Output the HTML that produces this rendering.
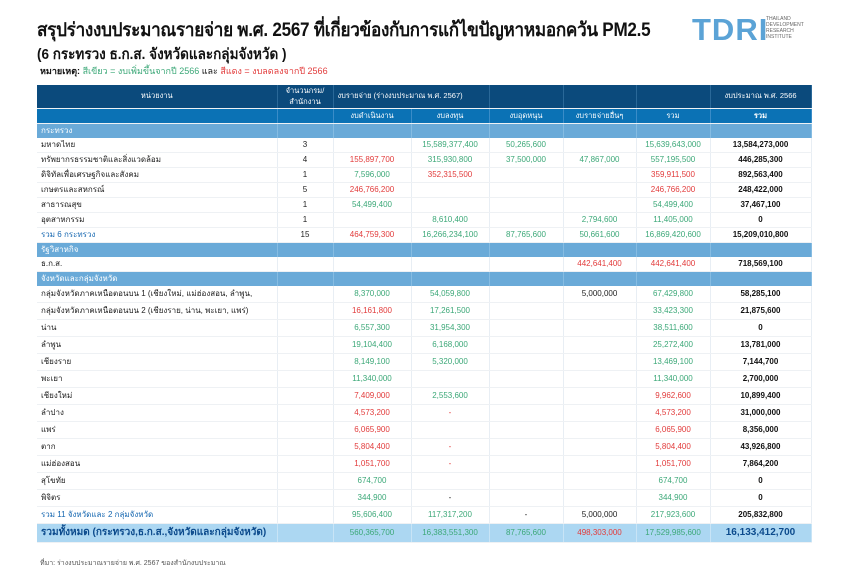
<!DOCTYPE html>
<html><head><meta charset="utf-8"><style>
body{margin:0;width:850px;height:574px;background:#fff;font-family:"Liberation Sans","Noto Sans CJK SC",sans-serif;position:relative;overflow:hidden}
.t1{position:absolute;left:37px;top:15px;font-size:19px;font-weight:bold;color:#111;letter-spacing:-0.3px;white-space:nowrap;transform:scaleX(0.9);transform-origin:left top}
.t2{position:absolute;left:37px;top:42px;font-size:15px;font-weight:bold;color:#111;white-space:nowrap;transform:scaleX(0.9);transform-origin:left top}
.t3{position:absolute;left:40px;top:64px;font-size:9px;color:#111;white-space:nowrap}
.g{color:#3ca878}.r{color:#e23b3b}
table{position:absolute;left:37px;top:85px;border-collapse:collapse;table-layout:fixed;width:774px;font-size:8px;line-height:1}
td{padding:0 4px;white-space:nowrap;overflow:hidden;border-right:1px solid #e8eef4;border-bottom:1px solid #eef1f4;text-align:center;height:14px;color:#222}
td:first-child{text-align:left}
tr.h1 td{background:#0b4a7c;color:#fff;height:23px;border-right:1px solid #2a6898;font-size:7.5px;line-height:1.35}
tr.h2 td{background:#0b72b5;color:#fff;height:14px;border-right:1px solid #3a8cc8;font-size:7.5px}
tr.s td{background:#6aaad8;color:#fff;height:14px;border-right:1px solid #86bce2;border-bottom:none}
tr.p td{height:16px}
tr.sum td:first-child{color:#1466b0}
td.b{font-weight:bold;color:#111}
tr.tot td{background:#acd7f2;height:18px;border-right:1px solid #c8e4f6}
tr.tot td:first-child{color:#0b4a8c;font-weight:bold;font-size:10px}
tr.tot td.b{color:#0b4a8c;font-size:10px}
.logo{position:absolute;left:692px;top:12px;font-size:31px;font-weight:bold;color:#5ba3d6;letter-spacing:1px}
.lt{position:absolute;left:766px;top:16px;font-size:5px;line-height:6px;color:#666}
.ft{position:absolute;left:40px;top:558px;font-size:7px;color:#555}
</style></head><body>
<div class="t1">สรุปร่างงบประมาณรายจ่าย พ.ศ. 2567 ที่เกี่ยวข้องกับการแก้ไขปัญหาหมอกควัน PM2.5</div>
<div class="t2">(6 กระทรวง ธ.ก.ส. จังหวัดและกลุ่มจังหวัด )</div>
<div class="t3"><b>หมายเหตุ:</b> <span class="g">สีเขียว = งบเพิ่มขึ้นจากปี 2566</span> และ <span class="r">สีแดง = งบลดลงจากปี 2566</span></div>
<div class="logo">TDRI</div>
<div class="lt">THAILAND<br>DEVELOPMENT<br>RESEARCH<br>INSTITUTE</div>
<table>
<colgroup><col style="width:240px"><col style="width:56px"><col style="width:78px"><col style="width:78px"><col style="width:74px"><col style="width:73px"><col style="width:74px"><col style="width:101px"></colgroup>
<tr class="h1"><td style="text-align:center">หน่วยงาน</td><td>จำนวนกรม/<br>สำนักงาน</td><td colspan="2" style="text-align:left">งบรายจ่าย (ร่างงบประมาณ พ.ศ. 2567)</td><td></td><td></td><td></td><td>งบประมาณ พ.ศ. 2566</td></tr>
<tr class="h2"><td></td><td></td><td>งบดำเนินงาน</td><td>งบลงทุน</td><td>งบอุดหนุน</td><td>งบรายจ่ายอื่นๆ</td><td>รวม</td><td><b>รวม</b></td></tr>
<tr class="s"><td>กระทรวง</td><td></td><td></td><td></td><td></td><td></td><td></td><td></td></tr>
<tr><td>มหาดไทย</td><td>3</td><td></td><td class="g">15,589,377,400</td><td class="g">50,265,600</td><td></td><td class="g">15,639,643,000</td><td class="b">13,584,273,000</td></tr>
<tr><td>ทรัพยากรธรรมชาติและสิ่งแวดล้อม</td><td>4</td><td class="r">155,897,700</td><td class="g">315,930,800</td><td class="g">37,500,000</td><td class="g">47,867,000</td><td class="g">557,195,500</td><td class="b">446,285,300</td></tr>
<tr><td>ดิจิทัลเพื่อเศรษฐกิจและสังคม</td><td>1</td><td class="g">7,596,000</td><td class="r">352,315,500</td><td></td><td></td><td class="r">359,911,500</td><td class="b">892,563,400</td></tr>
<tr><td>เกษตรและสหกรณ์</td><td>5</td><td class="r">246,766,200</td><td></td><td></td><td></td><td class="r">246,766,200</td><td class="b">248,422,000</td></tr>
<tr><td>สาธารณสุข</td><td>1</td><td class="g">54,499,400</td><td></td><td></td><td></td><td class="g">54,499,400</td><td class="b">37,467,100</td></tr>
<tr><td>อุตสาหกรรม</td><td>1</td><td></td><td class="g">8,610,400</td><td></td><td class="g">2,794,600</td><td class="g">11,405,000</td><td class="b">0</td></tr>
<tr class="sum"><td>รวม 6 กระทรวง</td><td>15</td><td class="r">464,759,300</td><td class="g">16,266,234,100</td><td class="g">87,765,600</td><td class="g">50,661,600</td><td class="g">16,869,420,600</td><td class="b">15,209,010,800</td></tr>
<tr class="s"><td>รัฐวิสาหกิจ</td><td></td><td></td><td></td><td></td><td></td><td></td><td></td></tr>
<tr><td>ธ.ก.ส.</td><td></td><td></td><td></td><td></td><td class="r">442,641,400</td><td class="r">442,641,400</td><td class="b">718,569,100</td></tr>
<tr class="s"><td>จังหวัดและกลุ่มจังหวัด</td><td></td><td></td><td></td><td></td><td></td><td></td><td></td></tr>
<tr class="p"><td>กลุ่มจังหวัดภาคเหนือตอนบน 1 (เชียงใหม่, แม่ฮ่องสอน, ลำพูน,</td><td></td><td class="g">8,370,000</td><td class="g">54,059,800</td><td></td><td>5,000,000</td><td class="g">67,429,800</td><td class="b">58,285,100</td></tr>
<tr class="p"><td>กลุ่มจังหวัดภาคเหนือตอนบน 2 (เชียงราย, น่าน, พะเยา, แพร่)</td><td></td><td class="r">16,161,800</td><td class="g">17,261,500</td><td></td><td></td><td class="g">33,423,300</td><td class="b">21,875,600</td></tr>
<tr class="p"><td>น่าน</td><td></td><td class="g">6,557,300</td><td class="g">31,954,300</td><td></td><td></td><td class="g">38,511,600</td><td class="b">0</td></tr>
<tr class="p"><td>ลำพูน</td><td></td><td class="g">19,104,400</td><td class="g">6,168,000</td><td></td><td></td><td class="g">25,272,400</td><td class="b">13,781,000</td></tr>
<tr class="p"><td>เชียงราย</td><td></td><td class="g">8,149,100</td><td class="g">5,320,000</td><td></td><td></td><td class="g">13,469,100</td><td class="b">7,144,700</td></tr>
<tr class="p"><td>พะเยา</td><td></td><td class="g">11,340,000</td><td></td><td></td><td></td><td class="g">11,340,000</td><td class="b">2,700,000</td></tr>
<tr class="p"><td>เชียงใหม่</td><td></td><td class="r">7,409,000</td><td class="g">2,553,600</td><td></td><td></td><td class="r">9,962,600</td><td class="b">10,899,400</td></tr>
<tr class="p"><td>ลำปาง</td><td></td><td class="r">4,573,200</td><td class="r">-</td><td></td><td></td><td class="r">4,573,200</td><td class="b">31,000,000</td></tr>
<tr class="p"><td>แพร่</td><td></td><td class="r">6,065,900</td><td></td><td></td><td></td><td class="r">6,065,900</td><td class="b">8,356,000</td></tr>
<tr class="p"><td>ตาก</td><td></td><td class="r">5,804,400</td><td class="r">-</td><td></td><td></td><td class="r">5,804,400</td><td class="b">43,926,800</td></tr>
<tr class="p"><td>แม่ฮ่องสอน</td><td></td><td class="r">1,051,700</td><td class="r">-</td><td></td><td></td><td class="r">1,051,700</td><td class="b">7,864,200</td></tr>
<tr class="p"><td>สุโขทัย</td><td></td><td class="g">674,700</td><td></td><td></td><td></td><td class="g">674,700</td><td class="b">0</td></tr>
<tr class="p"><td>พิจิตร</td><td></td><td class="g">344,900</td><td>-</td><td></td><td></td><td class="g">344,900</td><td class="b">0</td></tr>
<tr class="p sum"><td>รวม 11 จังหวัดและ 2 กลุ่มจังหวัด</td><td></td><td class="g">95,606,400</td><td class="g">117,317,200</td><td>-</td><td>5,000,000</td><td class="g">217,923,600</td><td class="b">205,832,800</td></tr>
<tr class="tot"><td>รวมทั้งหมด (กระทรวง,ธ.ก.ส.,จังหวัดและกลุ่มจังหวัด)</td><td></td><td class="g">560,365,700</td><td class="g">16,383,551,300</td><td class="g">87,765,600</td><td class="r">498,303,000</td><td class="g">17,529,985,600</td><td class="b">16,133,412,700</td></tr>
</table>
<div class="ft">ที่มา: ร่างงบประมาณรายจ่าย พ.ศ. 2567 ของสำนักงบประมาณ</div>
</body></html>
